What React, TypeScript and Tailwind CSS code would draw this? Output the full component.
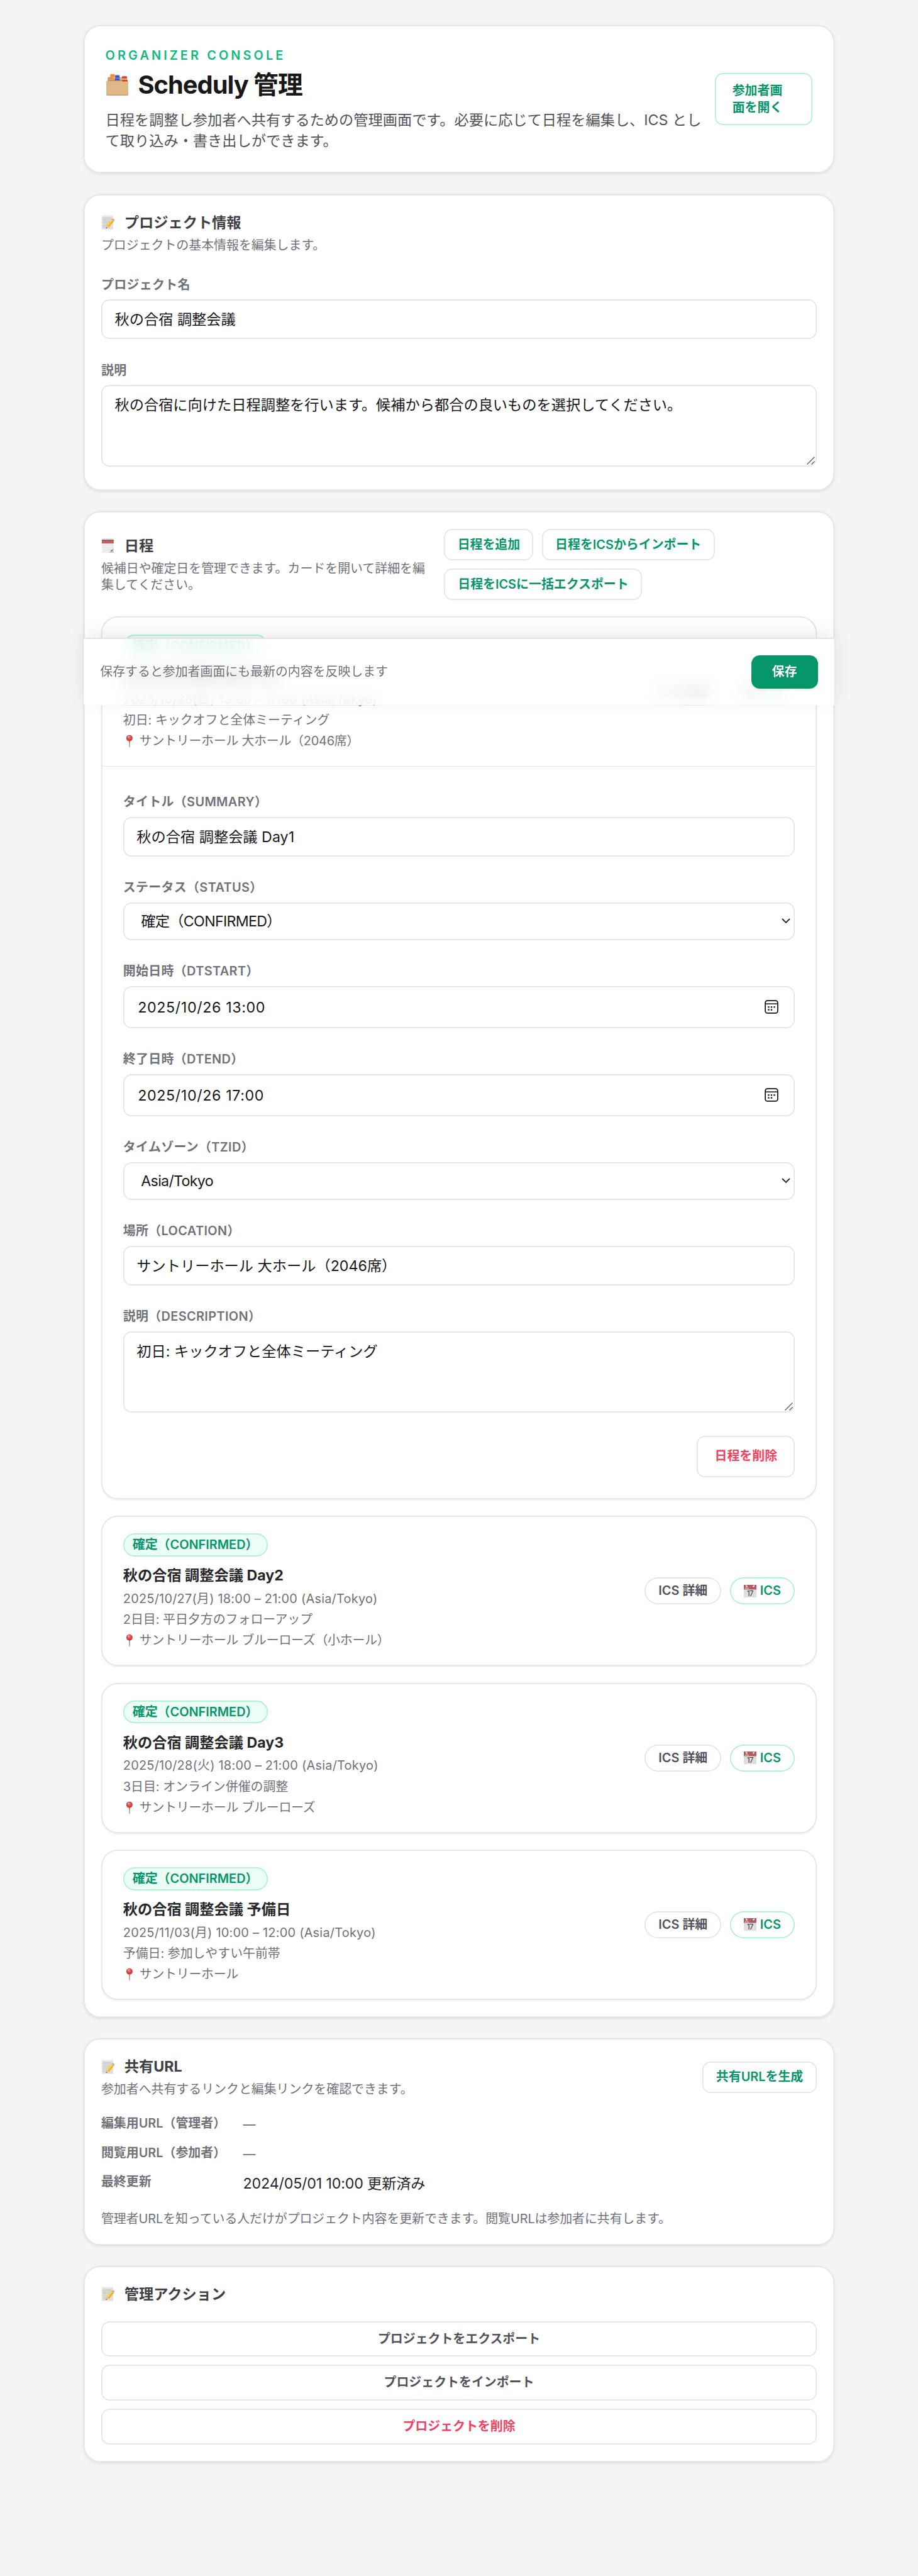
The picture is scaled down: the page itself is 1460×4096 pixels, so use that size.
import type { ReactNode } from "react";

function FolderIcon() {
  return (
    <svg className="h-[35px] w-[37px] shrink-0" viewBox="0 0 44 42">
      <path d="M5 10h34l3 7v5H2v-5z" fill="#c79f6b" />
      <path d="M9 1h8l1 6h-10z" fill="#f0913a" />
      <path d="M4 7h36l1 5H3z" fill="#d9b384" />
      <path d="M18 3h8l1 5h-9z" fill="#3553e8" />
      <path d="M31 5h9l1 4h-10z" fill="#e5312f" />
      <path d="M6 12h36v3H3z" fill="#b98f5c" />
      <path d="M5 7h9l1 4H4z" fill="#f0913a" />
      <path d="M18 9h8l1 4h-10z" fill="#3553e8" />
      <path d="M32 12h9l1 4H31z" fill="#e5312f" />
      <path d="M1 14h30l1 1h11v25a2 2 0 0 1-2 2H3a2 2 0 0 1-2-2z" fill="#dfb886" />
      <path d="M1 39.500h42v.5a2 2 0 0 1-2 2H3a2 2 0 0 1-2-2z" fill="#d0a770" />
    </svg>
  );
}

function MemoIcon() {
  return (
    <svg className="h-[23px] w-[21.500px] shrink-0" viewBox="0 0 26 28">
      <path d="M1 .5h22v27H1z" fill="#e0e0de" />
      <path d="M1 .5h22v2.500H1z" fill="#efefee" />
      <g stroke="#b3b3b1" strokeWidth="1" strokeDasharray="2.500 .8">
        <path d="M4 5h15M3 8h18M3 11h16M3 14h13M3 17h10M3 20h8M3 23h6" />
      </g>
      <path d="M9 26l2-7 8.500-10 4.500 3.500-8.500 10.500z" fill="#f0b31c" />
      <path d="M11 19l8.500-10 1.800 1.400-8.300 10.300z" fill="#fbd75a" />
      <path d="M19.500 9l1.400-1.600 4.500 3.600-1.400 1.500z" fill="#b9bcc4" />
      <path d="M20.900 7.400c1.800-1.600 6 1.500 4.500 3.600z" fill="#ee7f86" />
      <path d="M9 26l2-7 4.500 4z" fill="#e8c393" />
      <path d="M9 26l.8-2.600 1.600 1.300z" fill="#333" />
    </svg>
  );
}

function SpiralCalendarIcon() {
  return (
    <svg className="h-[23px] w-[21.500px] shrink-0" viewBox="0 0 26 28">
      <path d="M1 3h23v25H1z" fill="#efefef" />
      <path d="M1 3h23v7H1z" fill="#c9605f" />
      <path d="M1 3h23v2H1z" fill="#6d4a4a" />
      <path d="M3.500.5v4M6.500.5v4M9.500.5v4M12.500.5v4M15.500.5v4M18.500.5v4M21.500.5v4" stroke="#9a9a9a" strokeWidth="1.100" />
      <path d="M2 14h21M2 18h21M2 22h18M6 11v16M11 11v16M16 11v14" stroke="#dedede" strokeWidth=".6" />
      <path d="M24 18v10H13c5-.5 6-2 6.500-5 2.500.3 4-1.500 4.500-5z" fill="#c9c9c9" />
      <path d="M13 28c5-.5 9-4 11-10-1 3-2.500 4.500-5 4.700-.5 3-2 4.800-6 5.300z" fill="#555" />
    </svg>
  );
}

function PinIcon() {
  return (
    <svg className="h-[21px] w-[24px] shrink-0" viewBox="0 0 28 24">
      <path d="M10.800 10h1.800l-.3 13.500h-1.200z" fill="#8d7b78" />
      <circle cx="11.500" cy="6.500" r="5.800" fill="#d8393b" />
      <circle cx="11" cy="5" r="3.400" fill="#ec605c" />
      <circle cx="10.200" cy="4" r="1.500" fill="#fbb3ae" />
    </svg>
  );
}

function CalendarIcon() {
  return (
    <svg className="h-[20px] w-[20px] shrink-0" viewBox="0 0 24 24" fontFamily="Inter, sans-serif">
      <path d="M0 0h24v24H0z" fill="#dedede" />
      <path d="M0 0h24v9H0z" fill="#b15d5e" />
      <circle cx="5.500" cy="3" r="1.400" fill="#fff" />
      <circle cx="18.500" cy="3" r="1.400" fill="#fff" />
      <path d="M4 0l1 3M20 0l-1 3" stroke="#fff" strokeWidth="1" />
      <text x="1.500" y="8" fontSize="4.500" fill="#ecd3d3">JUL</text>
      <text x="12" y="21.500" fontSize="13.500" fontWeight="400" textAnchor="middle" fill="#333" letterSpacing="-.6">17</text>
    </svg>
  );
}

function PickerIcon() {
  return (
    <svg className="h-[22px] w-[22px] shrink-0" viewBox="0 0 26 26" fill="none">
      <rect x="1.300" y="1.300" width="23.400" height="23.400" rx="4" stroke="#111" strokeWidth="2" />
      <path d="M1.500 7.300h23" stroke="#111" strokeWidth="1.800" />
      <g fill="#111">
        <rect x="6.200" y="12" width="2.800" height="2.600" />
        <rect x="11.600" y="12" width="2.800" height="2.600" />
        <rect x="17" y="12" width="2.800" height="2.600" />
        <rect x="6.200" y="17.200" width="2.800" height="2.600" />
        <rect x="11.600" y="17.200" width="2.800" height="2.600" />
      </g>
    </svg>
  );
}

function Section({ children }: { children: ReactNode }) {
  return (
    <section className="rounded-[26.5px] bg-white p-4.25 shadow-[0_1.700px_4px_rgba(0,0,0,0.09)] inset-ring-[1.66px] inset-ring-[#e4e4e6]">
      {children}
    </section>
  );
}

function Heading({ icon, children }: { icon: ReactNode; children: ReactNode }) {
  return (
    <h2 className="flex h-5 items-center gap-[12px] text-[23.23px] leading-5 font-bold text-[#3f3f46]">
      <span className="flex w-3.75">{icon}</span>
      {children}
    </h2>
  );
}

function Field({ label, children }: { label: string; children: ReactNode }) {
  return (
    <div className="mt-4">
      <div className="h-7 pt-[10px] text-[19.91px] leading-4 font-semibold tracking-[0.018em] text-[#71717a]">{label}</div>
      {children}
    </div>
  );
}

const box = "relative flex w-full rounded-[13.3px] bg-white text-[23.23px] leading-5 text-[#18181b] inset-ring-[1.66px] inset-ring-[#e4e4e6]";

function TextBox({ children }: { children: ReactNode }) {
  return <div className={`${box} h-9.5 items-center px-3.25`}>{children}</div>;
}

function SelectBox({ children }: { children: ReactNode }) {
  return (
    <div className={`${box} h-9 items-center justify-between pr-[7px] pl-[28.500px]`}>
      <span className="tracking-[-0.03em]">{children}</span>
      <svg className="h-[9px] w-[14px]" viewBox="0 0 14 9" fill="none" stroke="#27272a" strokeWidth="1.800">
        <path d="M1 1l6 6L13 1" />
      </svg>
    </div>
  );
}

function DateBox({ children }: { children: ReactNode }) {
  return (
    <div className={`${box} h-[67.200px] items-center justify-between pr-[26px] pl-[23.500px]`}>
      <span className="tracking-[0.027em]">{children}</span>
      <PickerIcon />
    </div>
  );
}

function AreaBox({ children }: { children: ReactNode }) {
  return (
    <div className={`${box} mb-1.5 h-19.5 px-3.25 py-2.25`}>
      {children}
      <svg className="absolute right-[3px] bottom-[3px] h-[13px] w-[13px]" viewBox="0 0 13 13" fill="none" stroke="#5a5a5a" strokeWidth="1.300">
        <path d="M.5 12.500l12-12M7.500 12.500l5-5" />
      </svg>
    </div>
  );
}

const outline = "rounded-[13.3px] bg-white text-[19.91px] leading-4 font-semibold whitespace-nowrap inset-ring-[1.66px] inset-ring-[#e4e4e6]";

type Entry = { title: string; when: string; note: string; place: string };

function Summary({ title, when, note, place }: Entry) {
  return (
    <div className="flex items-center justify-between px-5.25 py-4.25">
      <div className="text-[19.91px] leading-4 text-[#71717a]">
        <div className="flex h-5.5 w-[230.500px] items-center rounded-full bg-[#ecfdf5] px-[15px] font-semibold whitespace-nowrap text-[#059669] inset-ring-[1.66px] inset-ring-[#a7f3d0]">
          確定（CONFIRMED）
        </div>
        <h3 className="mt-2 text-[23.23px] leading-5 font-bold text-[#27272a]">{title}</h3>
        <p className="mt-[7.640px] tracking-[0.012em]">{when}</p>
        <p className="mt-1">{note}</p>
        <p className="mt-1 -mb-px flex h-4 items-center gap-[2px] tracking-[-0.012em]">
          <PinIcon />
          {place}
        </p>
      </div>
      <div className="flex gap-2 text-[19.91px] leading-4 font-semibold whitespace-nowrap">
        <span className="flex h-6.5 w-[122px] items-center justify-center rounded-full bg-white text-[#52525b] inset-ring-[1.66px] inset-ring-[#e4e4e6]">
          ICS 詳細
        </span>
        <span className="flex h-6.5 w-[103.700px] items-center justify-center gap-[6px] rounded-full bg-white text-[#059669] inset-ring-[1.66px] inset-ring-[#a7f3d0]">
          <CalendarIcon />
          ICS
        </span>
      </div>
    </div>
  );
}

const cardShell = "mt-4 rounded-[26.5px] bg-white shadow-[0_1.700px_3.300px_rgba(0,0,0,0.06)] inset-ring-[1.66px] inset-ring-[#e4e4e6]";

const others: Entry[] = [
  { title: "秋の合宿 調整会議 Day2", when: "2025/10/27(月) 18:00 – 21:00 (Asia/Tokyo)", note: "2日目: 平日夕方のフォローアップ", place: "サントリーホール ブルーローズ（小ホール）" },
  { title: "秋の合宿 調整会議 Day3", when: "2025/10/28(火) 18:00 – 21:00 (Asia/Tokyo)", note: "3日目: オンライン併催の調整", place: "サントリーホール ブルーローズ" },
  { title: "秋の合宿 調整会議 予備日", when: "2025/11/03(月) 10:00 – 12:00 (Asia/Tokyo)", note: "予備日: 参加しやすい午前帯", place: "サントリーホール" },
];

export default function App() {
  return (
    <div className="relative h-[4096px] w-[1460px] overflow-hidden bg-[#f4f4f5] font-['Inter','Noto_Sans_CJK_JP',sans-serif] [--spacing:6.6364px]">
      <main className="flex flex-col gap-5 px-20 pt-6">
        <header className="flex items-center justify-between rounded-[26.5px] bg-white p-5.25 shadow-[0_1.700px_4px_rgba(0,0,0,0.09)] inset-ring-[1.66px] inset-ring-[#e4e4e6]">
          <div className="whitespace-nowrap">
            <p className="text-[19.91px] leading-4 font-semibold tracking-[0.205em] text-[#10b981]">ORGANIZER CONSOLE</p>
            <h1 className="mt-1 flex items-center gap-[15px] text-[39.82px] leading-8 font-bold tracking-[-0.025em] text-[#18181b]">
              <FolderIcon />
              Scheduly 管理
            </h1>
            <p className="mt-2 text-[23.23px] leading-5 text-[#52525b]">
              日程を調整し参加者へ共有するための管理画面です。必要に応じて日程を編集し、ICS とし
              <br />
              て取り込み・書き出しができます。
            </p>
          </div>
          <button className="h-12.5 w-23.5 shrink-0 rounded-[13.3px] bg-white px-4.25 text-left text-[19.91px] leading-4 font-semibold whitespace-nowrap text-[#059669] inset-ring-[1.66px] inset-ring-[#a7f3d0]">
            参加者画
            <br />
            面を開く
          </button>
        </header>

        <Section>
          <Heading icon={<MemoIcon />}>プロジェクト情報</Heading>
          <p className="mt-1 text-[19.91px] leading-4 text-[#71717a]">プロジェクトの基本情報を編集します。</p>
          <Field label="プロジェクト名">
            <TextBox>秋の合宿 調整会議</TextBox>
          </Field>
          <Field label="説明">
            <AreaBox>秋の合宿に向けた日程調整を行います。候補から都合の良いものを選択してください。</AreaBox>
          </Field>
        </Section>

        <Section>
          <div className="flex items-center">
            <div className="w-[545.500px] shrink-0">
              <Heading icon={<SpiralCalendarIcon />}>日程</Heading>
              <p className="mt-1 text-[19.91px] leading-4 whitespace-nowrap text-[#71717a]">
                候補日や確定日を管理できます。カードを開いて詳細を編
                <br />
                集してください。
              </p>
            </div>
            <div className="flex flex-wrap gap-2 text-[#059669]">
              <button className={`${outline} h-7.5 w-[142px]`}>日程を追加</button>
              <button className={`${outline} h-7.5 w-[275px]`}>日程をICSからインポート</button>
              <button className={`${outline} h-7.5 w-[315px]`}>日程をICSに一括エクスポート</button>
            </div>
          </div>

          <article className={cardShell}>
            <div className="h-[237.250px]">
              <Summary
                title="秋の合宿 調整会議 Day1"
                when="2025/10/26(日) 13:00 – 17:00 (Asia/Tokyo)"
                note="初日: キックオフと全体ミーティング"
                place="サントリーホール 大ホール（2046席）"
              />
            </div>
            <div className="h-[1.660px] bg-[#e4e4e6]" />
            <div className="flex flex-col px-5.25 pt-1 pb-5.25">
              <Field label="タイトル（SUMMARY）">
                <TextBox>秋の合宿 調整会議 Day1</TextBox>
              </Field>
              <Field label="ステータス（STATUS）">
                <SelectBox>確定（CONFIRMED）</SelectBox>
              </Field>
              <Field label="開始日時（DTSTART）">
                <DateBox>2025/10/26 13:00</DateBox>
              </Field>
              <Field label="終了日時（DTEND）">
                <DateBox>2025/10/26 17:00</DateBox>
              </Field>
              <Field label="タイムゾーン（TZID）">
                <SelectBox>Asia/Tokyo</SelectBox>
              </Field>
              <Field label="場所（LOCATION）">
                <TextBox>サントリーホール 大ホール（2046席）</TextBox>
              </Field>
              <Field label="説明（DESCRIPTION）">
                <AreaBox>初日: キックオフと全体ミーティング</AreaBox>
              </Field>
              <button className={`${outline} mt-4 h-10 w-23.5 self-end text-[#f43f5e]`}>日程を削除</button>
            </div>
          </article>

          {others.map((e) => (
            <article key={e.title} className={cardShell}>
              <Summary {...e} />
            </article>
          ))}
        </Section>

        <Section>
          <div className="flex items-center justify-between">
            <div>
              <Heading icon={<MemoIcon />}>共有URL</Heading>
              <p className="mt-1 text-[19.91px] leading-4 text-[#71717a]">参加者へ共有するリンクと編集リンクを確認できます。</p>
            </div>
            <button className={`${outline} h-7.5 w-[182px] text-[#059669]`}>共有URLを生成</button>
          </div>
          <dl className="mt-4 grid grid-cols-[225.600px_1fr] gap-y-2 text-[23.23px] leading-5 text-[#27272a]">
            <dt className="pt-px text-[19.91px] leading-4 font-semibold text-[#71717a]">編集用URL（管理者）</dt>
            <dd className="text-[19.91px] text-[#71717a]">—</dd>
            <dt className="pt-px text-[19.91px] leading-4 font-semibold text-[#71717a]">閲覧用URL（参加者）</dt>
            <dd className="text-[19.91px] text-[#71717a]">—</dd>
            <dt className="pt-px text-[19.91px] leading-4 font-semibold text-[#71717a]">最終更新</dt>
            <dd className="tracking-[-0.007em]">2024/05/01 10:00 更新済み</dd>
          </dl>
          <p className="mt-4 text-[19.91px] leading-4 tracking-[-0.003em] text-[#71717a]">
            管理者URLを知っている人だけがプロジェクト内容を更新できます。閲覧URLは参加者に共有します。
          </p>
        </Section>

        <Section>
          <Heading icon={<MemoIcon />}>管理アクション</Heading>
          <div className="mt-4 flex flex-col gap-2 text-[#52525b]">
            <button className={`${outline} h-8.5`}>プロジェクトをエクスポート</button>
            <button className={`${outline} h-8.5`}>プロジェクトをインポート</button>
            <button className={`${outline} h-8.5 text-[#f43f5e]`}>プロジェクトを削除</button>
          </div>
        </Section>
      </main>

      <div className="absolute inset-x-20 top-[1013.700px] z-10 flex h-[107.800px] items-center justify-between border-t-2 border-[#e4e4e6] bg-white/80 px-4 shadow-[0_-6.600px_26.500px_rgba(0,0,0,0.08)] backdrop-blur-[12px]">
        <span className="text-[19.91px] leading-4 text-[#71717a]">保存すると参加者画面にも最新の内容を反映します</span>
        <button className="h-8 w-16 rounded-[13.3px] bg-[#059669] text-[19.91px] leading-4 font-semibold text-white shadow-[0_1.700px_3.300px_rgba(0,0,0,0.08)]">
          保存
        </button>
      </div>
    </div>
  );
}
